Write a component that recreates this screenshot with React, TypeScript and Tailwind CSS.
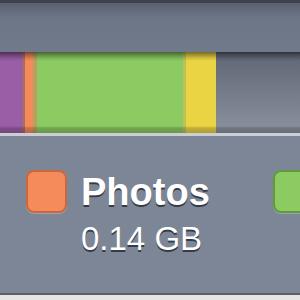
const segments = [
  { color: 'bg-[#9a5ea6]', width: 'w-[22px]' },
  { color: 'bg-[#a86a6e]', width: 'w-[3px]' },
  { color: 'bg-[#f58b5a]', width: 'w-[8px]' },
  { color: 'bg-[#b8a060]', width: 'w-[4px]' },
  { color: 'bg-[#8cca62]', width: 'w-[146px]' },
  { color: 'bg-[#bcc25a]', width: 'w-[3px]' },
  { color: 'bg-[#ead444]', width: 'w-[30px]' },
];

export default function App() {
  return (
    <div className="w-[300px] h-[300px] overflow-hidden flex flex-col bg-[#7d8696] font-['Liberation_Sans',Arial,sans-serif]">
      {/* header strip */}
      <div className="h-[52px] shrink-0 border-t-[3px] border-[#3d424c] bg-gradient-to-b from-[#5a6270] via-[#6d7686] via-30% to-[#717a8a]" />

      {/* usage bar */}
      <div className="relative h-[81px] shrink-0 flex">
        {segments.map((s, i) => (
          <div key={i} className={`${s.color} ${s.width} shrink-0`} />
        ))}
        <div className="flex-1 bg-gradient-to-b from-[#5f6674] to-[#8b929f]" />
        <div className="absolute inset-0 bg-[linear-gradient(to_bottom,rgba(0,0,0,0.5)_0px,rgba(0,0,0,0.3)_3px,rgba(0,0,0,0.12)_6px,rgba(0,0,0,0)_9px,rgba(0,0,0,0)_74px,rgba(0,0,0,0.18)_76px,rgba(0,0,0,0.25)_81px)]" />
      </div>
      <div className="h-[3px] shrink-0 bg-[#cbcfd5]" />

      {/* legend */}
      <div className="flex-1 flex items-start pl-[26px] pt-[34px] border-b-[2px] border-[#5a5f69]">
        <div className="flex items-start gap-[14px] shrink-0">
          <div className="w-[41px] h-[43px] rounded-[8px] border-[2px] bg-[#f58b5a] border-[#c9683f] shadow-[0_1px_0_rgba(255,255,255,0.25)] shrink-0" />
          <div className="mt-[3px] text-white [text-shadow:0_1.5px_0_rgba(20,25,35,0.7)]">
            <div className="text-[38px] leading-[38px] font-bold">Photos</div>
            <div className="mt-[11px] text-[33px] leading-[33px]">0.14 GB</div>
          </div>
        </div>
        <div className="ml-[63px] w-[41px] h-[43px] rounded-[8px] border-[2px] bg-[#8cca62] border-[#5f9b3d] shadow-[0_1px_0_rgba(255,255,255,0.25)] shrink-0" />
      </div>
      <div className="h-[5px] shrink-0 bg-[#e6e6e6]" />
    </div>
  );
}
